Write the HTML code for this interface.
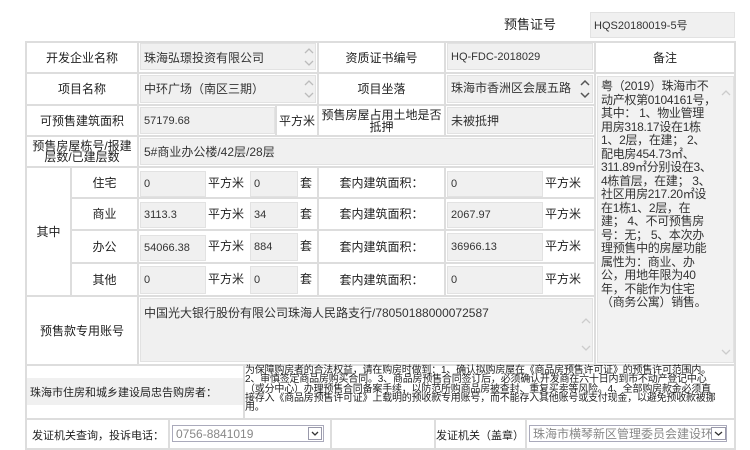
<!DOCTYPE html>
<html><head><meta charset="utf-8"><style>
*{margin:0;padding:0;box-sizing:border-box}
body{width:750px;height:450px;background:#fff;position:relative;overflow:hidden;font-family:"Liberation Sans","Noto Sans CJK SC","WenQuanYi Zen Hei",sans-serif;font-size:12px;color:#222}
.a{position:absolute}
.h{position:absolute;height:2px;background:#ddd}
.v{position:absolute;width:2px;background:#ddd}
.in{position:absolute;background:#f0f0f0;border:1px solid #e2e2e2;font-size:11px;padding:0 3px;display:flex;align-items:center;white-space:nowrap;overflow:hidden;color:#333}
.t{position:absolute;display:flex;align-items:center;justify-content:center;text-align:center;line-height:12px}
svg.sb{position:absolute}
</style></head><body>
<div class="t" style="left:480px;top:14px;width:100px;height:22px;font-size:13px">预售证号</div>
<div class="in" style="left:590px;top:12px;width:145px;height:26px">HQS20180019-5号</div>

<div class="h" style="left:25px;top:41px;width:711px"></div>
<div class="h" style="left:25px;top:448px;width:711px"></div>
<div class="v" style="left:25px;top:41px;height:409px"></div>
<div class="v" style="left:734px;top:41px;height:409px"></div>
<div class="h" style="left:25px;top:72px;width:711px"></div>
<div class="h" style="left:25px;top:104px;width:570px"></div>
<div class="h" style="left:25px;top:135px;width:570px"></div>
<div class="h" style="left:25px;top:166px;width:570px"></div>
<div class="h" style="left:71px;top:197px;width:524px"></div>
<div class="h" style="left:71px;top:229px;width:524px"></div>
<div class="h" style="left:71px;top:262px;width:524px"></div>
<div class="h" style="left:25px;top:295px;width:570px"></div>
<div class="h" style="left:25px;top:364px;width:711px"></div>
<div class="h" style="left:25px;top:418px;width:711px"></div>
<div class="v" style="left:137px;top:41px;height:323px"></div>
<div class="v" style="left:317px;top:41px;height:95px"></div>
<div class="v" style="left:444px;top:41px;height:95px"></div>
<div class="v" style="left:594px;top:41px;height:323px"></div>
<div class="v" style="left:70px;top:166px;height:130px"></div>
<div class="v" style="left:317px;top:166px;height:130px"></div>
<div class="v" style="left:444px;top:166px;height:130px"></div>
<div class="v" style="left:275px;top:104px;height:32px"></div>
<div class="v" style="left:243px;top:364px;height:55px"></div>
<div class="v" style="left:168px;top:418px;height:31px"></div>
<div class="v" style="left:330px;top:418px;height:31px"></div>
<div class="v" style="left:434px;top:418px;height:31px"></div>
<div class="v" style="left:525px;top:418px;height:31px"></div>

<div class="t" style="left:27px;top:43px;width:110px;height:29px">开发企业名称</div>
<div class="in" style="left:140px;top:43px;width:176px;height:27px;font-size:12px;align-items:flex-start;padding-top:5px">珠海弘璟投资有限公司</div>
<svg class="sb" style="left:303px;top:46px" width="12" height="22"><path d="M2 7 L6 3 L10 7 M2 15 L6 19 L10 15" stroke="#bbb" stroke-width="1.3" fill="none"/></svg>
<div class="t" style="left:319px;top:43px;width:125px;height:29px">资质证书编号</div>
<div class="in" style="left:447px;top:43px;width:146px;height:27px">HQ-FDC-2018029</div>
<div class="t" style="left:596px;top:43px;width:138px;height:29px">备注</div>

<div class="t" style="left:27px;top:74px;width:110px;height:30px">项目名称</div>
<div class="in" style="left:140px;top:75px;width:176px;height:28px;font-size:12px;align-items:flex-start;padding-top:4px">中环广场（南区三期）</div>
<svg class="sb" style="left:303px;top:78px" width="12" height="22"><path d="M2 7 L6 3 L10 7 M2 15 L6 19 L10 15" stroke="#bbb" stroke-width="1.3" fill="none"/></svg>
<div class="t" style="left:319px;top:74px;width:125px;height:30px">项目坐落</div>
<div class="in" style="left:447px;top:75px;width:146px;height:28px;font-size:12px;align-items:flex-start;padding-top:3px">珠海市香洲区会展五路</div>
<svg class="sb" style="left:579px;top:78px" width="12" height="22"><path d="M2 7 L6 3 L10 7 M2 15 L6 19 L10 15" stroke="#555" stroke-width="1.5" fill="none"/></svg>

<div class="in" style="left:597px;top:76px;width:137px;height:287px;align-items:flex-start;font-size:12px;line-height:13.5px;padding:3px 0 0 3px;background:#f2f2f2;letter-spacing:-0.3px">粤（2019）珠海市不<br>动产权第0104161号，<br>其中： 1、物业管理<br>用房318.17设在1栋<br>1、2层，在建； 2、<br>配电房454.73㎡、<br>311.89㎡分别设在3、<br>4栋首层，在建； 3、<br>社区用房217.20㎡设<br>在1栋1、2层，在<br>建； 4、不可预售房<br>号：无； 5、本次办<br>理预售中的房屋功能<br>属性为：商业、办<br>公，用地年限为40<br>年，不能作为住宅<br>（商务公寓）销售。</div>
<div class="a" style="left:718px;top:77px;width:15px;height:285px;background:#f2f2f2"></div>
<svg class="sb" style="left:719px;top:88px" width="14" height="10"><path d="M3 7 L7 3 L11 7" stroke="#ccc" stroke-width="1.3" fill="none"/></svg>
<svg class="sb" style="left:719px;top:347px" width="14" height="10"><path d="M3 3 L7 7 L11 3" stroke="#ccc" stroke-width="1.3" fill="none"/></svg>

<div class="t" style="left:27px;top:106px;width:110px;height:29px">可预售建筑面积</div>
<div class="in" style="left:140px;top:107px;width:135px;height:27px">57179.68</div>
<div class="t" style="left:277px;top:106px;width:40px;height:29px">平方米</div>
<div class="t" style="left:319px;top:106px;width:125px;height:29px">预售房屋占用土地是否抵押</div>
<div class="in" style="left:447px;top:107px;width:146px;height:27px;font-size:12px">未被抵押</div>

<div class="t" style="left:27px;top:137px;width:110px;height:29px;line-height:11px">预售房屋栋号/报建层数/已建层数</div>
<div class="in" style="left:140px;top:138px;width:453px;height:27px;font-size:12px">5#商业办公楼/42层/28层</div>

<div class="t" style="left:27px;top:168px;width:43px;height:127px">其中</div>

<div class="t" style="left:72px;top:168px;width:65px;height:29px">住宅</div>
<div class="in" style="left:140px;top:171px;width:66px;height:26px">0</div>
<div class="a" style="left:208px;top:174px">平方米</div>
<div class="in" style="left:250px;top:171px;width:48px;height:26px">0</div>
<div class="a" style="left:300px;top:174px">套</div>
<div class="t" style="left:319px;top:168px;width:125px;height:29px">套内建筑面积：</div>
<div class="in" style="left:447px;top:171px;width:96px;height:26px">0</div>
<div class="a" style="left:545px;top:174px">平方米</div>

<div class="t" style="left:72px;top:199px;width:65px;height:30px">商业</div>
<div class="in" style="left:140px;top:202px;width:66px;height:26px">3113.3</div>
<div class="a" style="left:208px;top:205px">平方米</div>
<div class="in" style="left:250px;top:202px;width:48px;height:26px">34</div>
<div class="a" style="left:300px;top:205px">套</div>
<div class="t" style="left:319px;top:199px;width:125px;height:30px">套内建筑面积：</div>
<div class="in" style="left:447px;top:202px;width:96px;height:26px">2067.97</div>
<div class="a" style="left:545px;top:205px">平方米</div>

<div class="t" style="left:72px;top:231px;width:65px;height:31px">办公</div>
<div class="in" style="left:140px;top:235px;width:66px;height:26px">54066.38</div>
<div class="a" style="left:208px;top:237px">平方米</div>
<div class="in" style="left:250px;top:233px;width:48px;height:28px">884</div>
<div class="a" style="left:300px;top:237px">套</div>
<div class="t" style="left:319px;top:231px;width:125px;height:31px">套内建筑面积：</div>
<div class="in" style="left:447px;top:233px;width:96px;height:28px">36966.13</div>
<div class="a" style="left:545px;top:237px">平方米</div>

<div class="t" style="left:72px;top:264px;width:65px;height:31px">其他</div>
<div class="in" style="left:140px;top:266px;width:66px;height:28px">0</div>
<div class="a" style="left:208px;top:270px">平方米</div>
<div class="in" style="left:250px;top:266px;width:48px;height:28px">0</div>
<div class="a" style="left:300px;top:270px">套</div>
<div class="t" style="left:319px;top:264px;width:125px;height:31px">套内建筑面积：</div>
<div class="in" style="left:447px;top:266px;width:96px;height:28px">0</div>
<div class="a" style="left:545px;top:270px">平方米</div>

<div class="t" style="left:27px;top:297px;width:110px;height:67px">预售款专用账号</div>
<div class="in" style="left:140px;top:298px;width:453px;height:64px;font-size:12px;align-items:flex-start;padding-top:5px">中国光大银行股份有限公司珠海人民路支行/78050188000072587</div>
<svg class="sb" style="left:580px;top:316px" width="12" height="10"><path d="M2 7 L6 3 L10 7" stroke="#ccc" stroke-width="1.3" fill="none"/></svg>
<svg class="sb" style="left:580px;top:343px" width="12" height="10"><path d="M2 3 L6 7 L10 3" stroke="#ccc" stroke-width="1.3" fill="none"/></svg>

<div class="a" style="left:27px;top:378px;width:216px;height:27px;background:#f0f0f0;display:flex;align-items:center;padding-left:3px;font-size:11px">珠海市住房和城乡建设局忠告购房者：</div>
<div class="a" style="left:245px;top:366px;width:489px;font-size:10px;line-height:9.3px;white-space:nowrap;letter-spacing:-0.2px">为保障购房者的合法权益，请在购房时做到：1、确认拟购房屋在《商品房预售许可证》的预售许可范围内。<br>2、审慎签定商品房购买合同。3、商品房预售合同签订后，必须确认开发商在六十日内到市不动产登记中心<br>（或分中心）办理预售合同备案手续，以防范所购商品房被查封、重复买卖等风险。4、全部购房款金必须直<br>接存入《商品房预售许可证》上载明的预收款专用账号，而不能存入其他账号或支付现金，以避免预收款被挪<br>用。</div>

<div class="a" style="left:32px;top:427px;font-size:11px">发证机关查询，投诉电话：</div>
<div class="in" style="left:172px;top:425px;width:152px;height:17px;background:#fff;border-color:#aab;color:#888;font-size:12px">0756-8841019</div>
<div class="a" style="left:308px;top:427px;width:14px;height:13px;border:1px solid #99a;background:#fff"></div>
<svg class="sb" style="left:309px;top:428px" width="12" height="11"><path d="M3 4 L6 7 L9 4" stroke="#333" stroke-width="1.3" fill="none"/></svg>
<div class="a" style="left:436px;top:427px;font-size:11px">发证机关（盖章）</div>
<div class="in" style="left:529px;top:425px;width:198px;height:17px;background:#fff;border-color:#aab;color:#888;font-size:12px">珠海市横琴新区管理委员会建设环</div>
<div class="a" style="left:711px;top:427px;width:15px;height:13px;border:1px solid #99a;background:#fff"></div>
<svg class="sb" style="left:712px;top:428px" width="13" height="11"><path d="M3 4 L6.5 7 L10 4" stroke="#333" stroke-width="1.3" fill="none"/></svg>
</body></html>
